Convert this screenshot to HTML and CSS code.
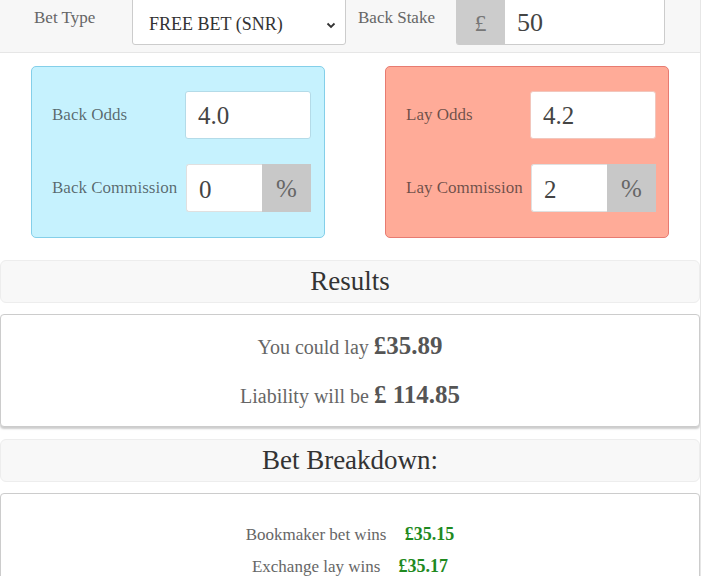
FILE: index.html
```html
<!DOCTYPE html>
<html lang="en">
<head>
<meta charset="utf-8">
<title>Matched Betting Calculator</title>
<link rel="stylesheet" href="styles.css">
</head>
<body>
<div class="page">
  <div class="top-bar">
    <label class="top-label">Bet Type</label>
    <div class="select">
      <span>FREE BET (SNR)</span>
      <svg class="chev" width="10" height="7" viewBox="0 0 10 7"><path d="M1.5 1.5 L5 5 L8.5 1.5" fill="none" stroke="#333" stroke-width="1.8"/></svg>
    </div>
    <label class="top-label">Back Stake</label>
    <div class="stake-group">
      <span class="addon pound">£</span>
      <span class="field stake">50</span>
    </div>
  </div>

  <div class="boxes">
    <div class="box back">
      <div class="row">
        <span class="box-label">Back Odds</span>
        <span class="field odds">4.0</span>
      </div>
      <div class="row">
        <span class="box-label">Back Commission</span>
        <span class="comm-group"><span class="field comm">0</span><span class="addon pct">%</span></span>
      </div>
    </div>
    <div class="box lay">
      <div class="row">
        <span class="box-label">Lay Odds</span>
        <span class="field odds">4.2</span>
      </div>
      <div class="row">
        <span class="box-label">Lay Commission</span>
        <span class="comm-group"><span class="field comm">2</span><span class="addon pct">%</span></span>
      </div>
    </div>
  </div>

  <div class="section-head">Results</div>
  <div class="panel results">
    <p class="res-line">You could lay <b>£35.89</b></p>
    <p class="res-line">Liability will be <b>£ 114.85</b></p>
  </div>

  <div class="section-head breakdown-head">Bet Breakdown:</div>
  <div class="panel breakdown">
    <p class="bd-line">Bookmaker bet wins <b class="win">£35.15</b></p>
    <p class="bd-line">Exchange lay wins <b class="win">£35.17</b></p>
  </div>
</div>
</body>
</html>
```

FILE: styles.css
```css
html, body {
  margin: 0;
  padding: 0;
  background: #fff;
  font-family: "Liberation Serif", "Times New Roman", serif;
}
.page {
  width: 700px;
  min-height: 576px;
  border-right: 1px solid #e6e6e6;
  overflow: hidden;
}
.top-bar {
  height: 53px;
  box-sizing: border-box;
  background: #f7f7f7;
  border-bottom: 1px solid #e6e6e6;
  display: flex;
  align-items: flex-end;
  padding: 0 0 7px 34px;
}
.top-label {
  width: 98px;
  font-size: 17px;
  line-height: 20px;
  color: #666;
  margin-bottom: 17px;
}
.select {
  width: 214px;
  height: 52px;
  box-sizing: border-box;
  background: #fff;
  border: 1px solid #ccc;
  border-radius: 3px;
  margin-right: 12px;
  display: flex;
  align-items: center;
  justify-content: space-between;
  padding: 10px 9px 0 16px;
  font-size: 18px;
  color: #333;
}
.chev { margin-top: 2px; }
.stake-group {
  width: 209px;
  height: 52px;
  display: flex;
  border-radius: 3px;
  overflow: hidden;
  border: 1px solid #ccc;
  border-left: none;
  box-sizing: border-box;
}
.addon {
  background: #ccc;
  color: #777;
  display: flex;
  align-items: center;
  justify-content: center;
}
.pound {
  width: 49px;
  font-size: 24px;
  padding-top: 8px;
  box-sizing: border-box;
}
.field {
  background: #fff;
  color: #444;
  display: flex;
  align-items: center;
  box-sizing: border-box;
}
.stake {
  flex: 1;
  font-size: 26px;
  padding: 8px 0 0 12px;
}
.boxes {
  display: flex;
  padding: 13px 0 0 31px;
  gap: 60px;
}
.box {
  height: 172px;
  box-sizing: border-box;
  border-radius: 5px;
  padding: 24px 0 0 20px;
  display: flex;
  flex-direction: column;
  gap: 25px;
}
.back {
  width: 294px;
  background: #c6f2fe;
  border: 1px solid #84cfe9;
  padding-right: 13px;
}
.lay {
  width: 284px;
  background: #ffab98;
  border: 1px solid #e77b71;
  padding-right: 12px;
}
.row {
  display: flex;
  align-items: center;
  justify-content: space-between;
  height: 48px;
}
.box-label {
  font-size: 17px;
  color: rgba(30, 30, 30, 0.66);
}
.odds {
  width: 126px;
  height: 48px;
  border: 1px solid #c8c8c8;
  border-radius: 3px;
  font-size: 25px;
  padding: 2px 0 0 12px;
}
.lay .odds { border-color: #f2c6bc; }
.back .odds { border-color: #b4dbe8; }
.comm-group {
  display: flex;
  width: 125px;
  height: 48px;
}
.comm {
  width: 76px;
  font-size: 25px;
  padding: 4px 0 0 12px;
  border: 1px solid #e0e0e0;
  border-right: none;
  border-radius: 3px 0 0 3px;
}
.pct {
  width: 49px;
  font-size: 25px;
  background: #c8c8c8;
  color: #666;
  padding-top: 2px;
  box-sizing: border-box;
}
.section-head {
  margin-top: 22px;
  height: 43px;
  box-sizing: border-box;
  background: #f8f8f8;
  border: 1px solid #ededed;
  border-radius: 6px;
  text-align: center;
  font-size: 27px;
  line-height: 40px;
  color: #333;
}
.panel {
  margin-top: 11px;
  background: #fff;
  border: 1px solid #ccc;
  border-radius: 4px;
  box-shadow: 0 2px 2px rgba(0, 0, 0, 0.2);
  text-align: center;
  color: #666;
}
.results {
  height: 113px;
  box-sizing: border-box;
  padding-top: 15px;
}
.res-line {
  margin: 0;
  font-size: 20px;
  line-height: 32px;
  height: 49px;
}
.res-line b {
  font-size: 25px;
  color: #555;
}
.breakdown-head {
  margin-top: 12px;
}
.breakdown {
  height: 120px;
  box-sizing: border-box;
  padding-top: 28px;
}
.bd-line {
  margin: 0;
  font-size: 17px;
  line-height: 24px;
  height: 32px;
}
.win {
  color: #1f8a1f;
  font-size: 18px;
  margin-left: 14px;
}
```
